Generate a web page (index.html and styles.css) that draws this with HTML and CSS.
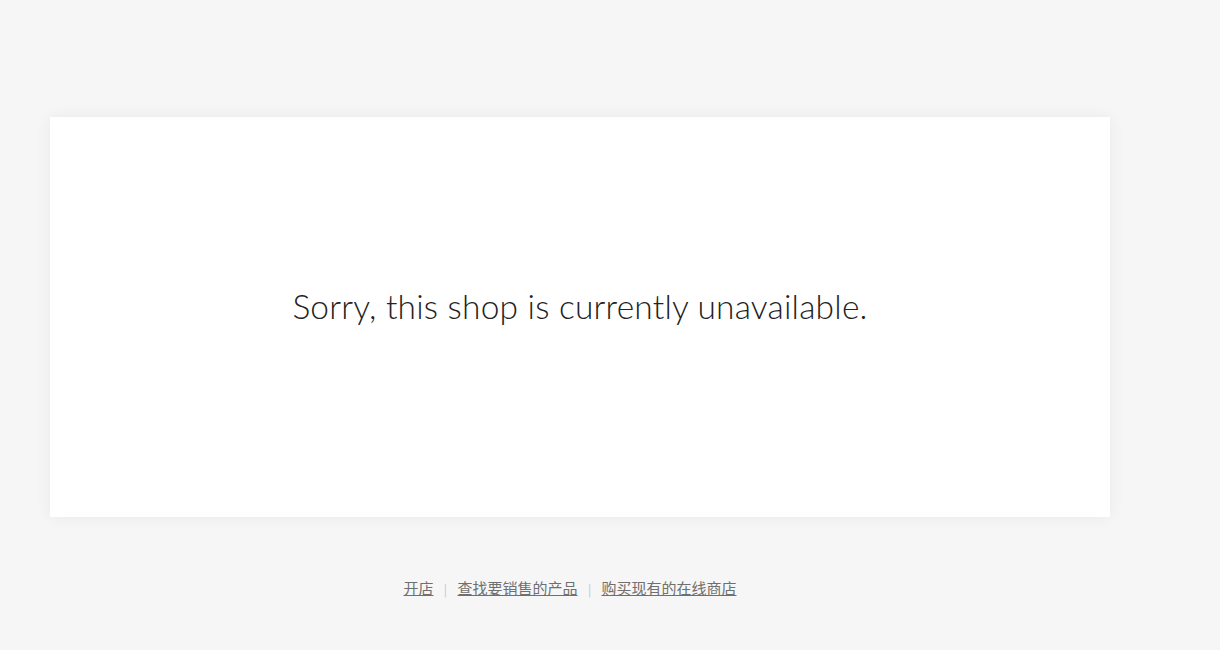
FILE: index.html
```html
<!DOCTYPE html>
<html lang="zh-CN">
  <head>
    <meta charset="UTF-8" />
    <meta name="viewport" content="width=device-width, initial-scale=1.0" />
    <title>Shop unavailable</title>
    <link rel="stylesheet" href="styles.css">
  </head>
  <body>
    <div class="page">
      <div class="card">
        <h1 class="message">Sorry, this shop is currently unavailable.</h1>
      </div>

      <div class="footer-links">
        <a href="#">开店</a>
        <span class="sep">|</span>
        <a href="#">查找要销售的产品</a>
        <span class="sep">|</span>
        <a href="#">购买现有的在线商店</a>
      </div>
    </div>
  </body>
</html>
```

FILE: styles.css
```css
* {
  box-sizing: border-box;
}

body {
  margin: 0;
  background-color: #f6f6f6;
  font-family: Lato, "Noto Sans CJK SC", sans-serif;
}

.page {
  width: 1060px;
  margin-left: 50px;
  padding-top: 117px;
}

.card {
  height: 400px;
  padding-bottom: 22px;
  background: white;
  box-shadow: 0 0 15px rgba(0, 0, 0, 0.06);
  display: flex;
  align-items: center;
  justify-content: center;
}

.message {
  margin: 0;
  font-size: 33.5px;
  font-weight: 300;
  color: #222;
  letter-spacing: 0.2px;
}

.footer-links {
  margin-top: 60px;
  padding-right: 20px;
  text-align: center;
  font-family: "Noto Sans CJK SC", sans-serif;
  font-size: 15px;
  color: #777;
}

.footer-links a {
  color: #6f6f6f;
}

.sep {
  color: #b5c4d4;
  font-size: 12px;
  margin: 0 7px;
}
```
